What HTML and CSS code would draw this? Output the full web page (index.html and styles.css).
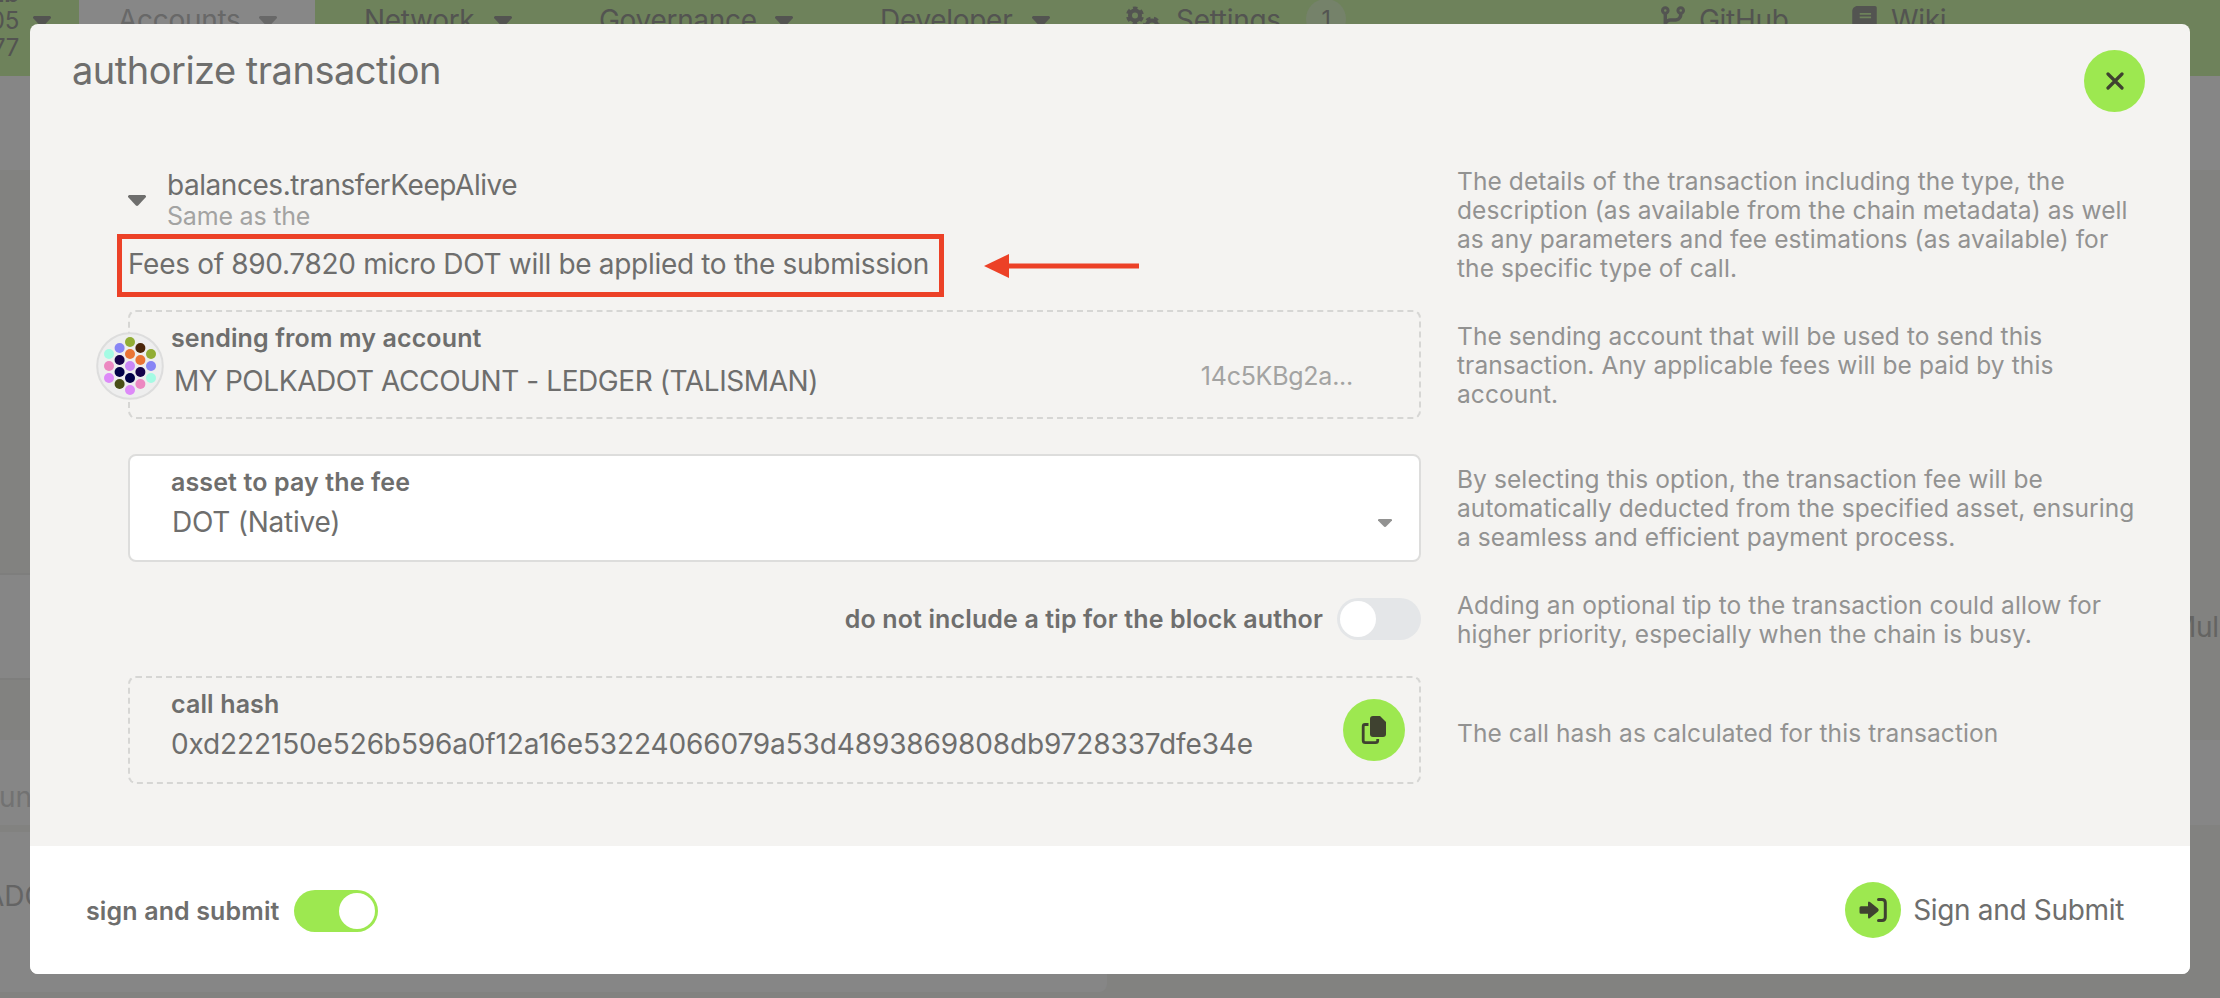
FILE: index.html
```
<!DOCTYPE html>
<html lang="en">
<head>
    <meta charset="UTF-8">
    <meta name="viewport" content="width=device-width, initial-scale=1.0">
    <title>Authorize transaction</title>
    <link rel="stylesheet" href="styles.css">
</head>
<body>
    <div class="app">
        <header class="topbar">
            <div class="chain">
                <div class="chain-info">
                    <b>ub</b>
                    <span>05</span>
                    <span>77</span>
                </div>
                <i class="caret"></i>
            </div>
            <nav>
                <ul>
                    <li class="active"><a href="#accounts">Accounts</a><i class="caret"></i></li>
                    <li class="network"><a href="#network">Network</a><i class="caret"></i></li>
                    <li class="governance"><a href="#governance">Governance</a><i class="caret"></i></li>
                    <li class="developer"><a href="#developer">Developer</a><i class="caret"></i></li>
                    <li class="settings">
                        <svg width="34" height="28" viewBox="0 0 34 28">
                            <g fill="none" stroke="#535451">
                                <circle cx="9" cy="9.500" r="5" stroke-width="4"/>
                                <circle cx="9" cy="9.500" r="7.500" stroke-width="3" stroke-dasharray="4.400 3.454" stroke-dashoffset="-1.700"/>
                                <circle cx="26" cy="19.500" r="5" stroke-width="4"/>
                                <circle cx="26" cy="19.500" r="7.500" stroke-width="3" stroke-dasharray="4.400 3.454" stroke-dashoffset="-5.600"/>
                            </g>
                        </svg>
                        <a href="#settings">Settings</a>
                        <span class="count">1</span>
                    </li>
                </ul>
            </nav>
            <div class="links">
                <a class="github" href="#github">
                    <svg width="24" height="28" viewBox="0 0 448 512" fill="#535451"><path d="M80 104a24 24 0 1 0 0-48 24 24 0 1 0 0 48zm80-24c0 32.800-19.700 61-48 73.300v87.800c18.800-10.900 40.700-17.100 64-17.100h96c35.300 0 64-28.700 64-64v-6.700C307.700 141 288 112.800 288 80c0-44.200 35.800-80 80-80s80 35.800 80 80c0 32.800-19.700 61-48 73.300V160c0 70.700-57.300 128-128 128H176c-35.300 0-64 28.700-64 64v6.700c28.300 12.300 48 40.500 48 73.300 0 44.200-35.800 80-80 80S0 476.200 0 432c0-32.800 19.700-61 48-73.300V153.300C19.700 141 0 112.800 0 80 0 35.800 35.800 0 80 0s80 35.800 80 80zm232 0a24 24 0 1 0-48 0 24 24 0 1 0 48 0z" fill-rule="evenodd"/></svg>
                    GitHub
                </a>
                <a class="wiki" href="#wiki">
                    <svg width="25" height="28" viewBox="0 0 448 512" fill="#535451"><path fill-rule="evenodd" d="M96 0C43 0 0 43 0 96v320c0 53 43 96 96 96h320c18 0 32-14 32-32s-14-32-32-32v-64c18 0 32-14 32-32V32c0-18-14-32-32-32H96zm40 128h208v32H136zm0 64h208v32H136z"/></svg>
                    Wiki
                </a>
            </div>
        </header>
        <div class="page">
            <div class="page-tabs"></div>
            <div class="page-space"></div>
            <div class="page-summary"><div class="summary-card"></div><span>Mul</span></div>
            <div class="page-gap"></div>
            <div class="page-filter"><span>un</span></div>
            <div class="page-table"><div class="page-card"><span>ADO</span></div></div>
        </div>
    </div>

    <div class="modal">
        <div class="modal-header">
            <h1>authorize transaction</h1>
            <button class="round close" aria-label="close">
                <svg width="18" height="18" viewBox="0 0 18 18"><path d="M2 2l14 14M16 2L2 16" stroke="#3f4230" stroke-width="3.200" stroke-linecap="round"/></svg>
            </button>
        </div>

        <div class="modal-content">
            <div class="row row-call">
                <div class="call">
                    <div class="call-info">
                        <i class="caret"></i>
                        <div>
                            <div class="call-name">balances.transferKeepAlive</div>
                            <div class="call-doc">Same as the</div>
                        </div>
                    </div>
                    <div class="fees">
                        <span class="fees-box">Fees of 890.7820 micro DOT will be applied to the submission</span>
                        <svg class="arrow" width="155" height="26" viewBox="0 0 155 26" fill="#ec4127"><path d="M0 13L25 1v24z"/><path d="M24 10.500h131v5H24z"/></svg>
                    </div>
                </div>
                <p class="help">The details of the transaction including the type, the description (as available from the chain metadata) as well as any parameters and fee estimations (as available) for the specific type of call.</p>
            </div>

            <div class="row row-account">
                <div class="field dashed">
                    <svg class="identicon" width="68" height="68" viewBox="-34 -34 68 68">
                        <circle r="32.800" fill="#eeeeee" stroke="#dddddd" stroke-width="2"/>
                        <circle cx="0" cy="-24" r="5" fill="#91ad34"/>
                        <circle cx="-10.400" cy="-18" r="5" fill="#8785f5"/>
                        <circle cx="10.400" cy="-18" r="5" fill="#4b260a"/>
                        <circle cx="-21" cy="-12" r="5" fill="#a5fbe4"/>
                        <circle cx="0" cy="-12" r="5" fill="#ea7434"/>
                        <circle cx="21" cy="-12" r="5" fill="#91ad34"/>
                        <circle cx="-10.400" cy="-6" r="5" fill="#16024a"/>
                        <circle cx="10.400" cy="-6" r="5" fill="#ea7434"/>
                        <circle cx="-21" cy="0" r="5" fill="#ec88c1"/>
                        <circle cx="0" cy="0" r="5" fill="#c986f7"/>
                        <circle cx="21" cy="0" r="5" fill="#8785f5"/>
                        <circle cx="-10.400" cy="6" r="5" fill="#020247"/>
                        <circle cx="10.400" cy="6" r="5" fill="#16024a"/>
                        <circle cx="-21" cy="12" r="5" fill="#dd8af8"/>
                        <circle cx="0" cy="12" r="5" fill="#020247"/>
                        <circle cx="21" cy="12" r="5" fill="#a5fbe4"/>
                        <circle cx="-10.400" cy="18" r="5" fill="#484f17"/>
                        <circle cx="10.400" cy="18" r="5" fill="#ec88c1"/>
                        <circle cx="0" cy="24" r="5" fill="#dd8af8"/>
                    </svg>
                    <label>sending from my account</label>
                    <div class="account">
                        <span class="account-name">MY POLKADOT ACCOUNT - LEDGER (TALISMAN)</span>
                        <span class="address">14c5KBg2a...</span>
                    </div>
                </div>
                <p class="help">The sending account that will be used to send this transaction. Any applicable fees will be paid by this account.</p>
            </div>

            <div class="row row-asset">
                <div class="field select">
                    <label>asset to pay the fee</label>
                    <div class="asset">
                        <span class="asset-name">DOT (Native)</span>
                        <i class="caret small"></i>
                    </div>
                </div>
                <p class="help">By selecting this option, the transaction fee will be automatically deducted from the specified asset, ensuring a seamless and efficient payment process.</p>
            </div>

            <div class="row row-tip">
                <div class="tip">
                    <label>do not include a tip for the block author</label>
                    <span class="toggle"></span>
                </div>
                <p class="help">Adding an optional tip to the transaction could allow for higher priority, especially when the chain is busy.</p>
            </div>

            <div class="row row-hash">
                <div class="field dashed hash-field">
                    <div>
                        <label>call hash</label>
                        <div class="hash">0xd222150e526b596a0f12a16e53224066079a53d4893869808db9728337dfe34e</div>
                    </div>
                    <button class="round" aria-label="copy">
                        <svg width="26" height="30" viewBox="0 0 26 30"><path d="M12 1h7l6 6v12q0 3-3 3H12q-3 0-3-3V4q0-3 3-3z" fill="#3f4230"/><path d="M7.500 9.500H4Q2.200 9.500 2.200 11.500V25.500Q2.200 27.700 4.400 27.700H14.500Q16.700 27.700 16.700 25.500V24" fill="none" stroke="#3f4230" stroke-width="2.800"/></svg>
                    </button>
                </div>
                <p class="help">The call hash as calculated for this transaction</p>
            </div>
        </div>

        <div class="modal-footer">
            <div class="sign">
                <label>sign and submit</label>
                <span class="toggle on"></span>
            </div>
            <button class="submit">
                <span class="round">
                    <svg width="28" height="26" viewBox="0 0 28 26"><path d="M2 9.200h7V6q0-2.500 2-1L19 11.500q1.600 1.500 0 3L11 21q-2 1.500-2-1v-3.200H2q-1.500 0-1.500-1.500v-4.600q0-1.500 1.500-1.500z" fill="#3f4230"/><path d="M19.500 2.500h3.500q3.300 0 3.300 3.300v14.400q0 3.300-3.300 3.300h-3.500" fill="none" stroke="#3f4230" stroke-width="3" stroke-linecap="round"/></svg>
                </span>
                <span class="submit-text">Sign and Submit</span>
            </button>
        </div>
    </div>
</body>
</html>
```
FILE: styles.css
```
* {
    margin: 0;
    padding: 0;
    box-sizing: border-box;
    font-family: Inter, 'Liberation Sans', sans-serif;
}

body {
    width: 2220px;
    height: 998px;
    overflow: hidden;
    background-color: #828280;
    color: #6e6e6d;
    font-size: 28px;
    line-height: 34px;
}

/* dimmed page behind the dialog */
.app {
    height: 998px;
    overflow: hidden;
    color: #535451;
}

.topbar {
    display: flex;
    height: 76px;
    background-color: #6e825b;
    letter-spacing: -0.3px;
}

.topbar a {
    color: #535451;
    text-decoration: none;
}

.chain {
    display: flex;
    width: 79px;
}

.chain-info {
    display: flex;
    flex-direction: column;
    align-items: flex-end;
    width: 19px;
    margin-right: 14px;
    margin-top: -20px;
    font-size: 24px;
    line-height: 27px;
    white-space: nowrap;
}

.caret {
    display: block;
    flex: none;
    width: 18px;
    height: 11px;
    background-color: currentColor;
    clip-path: polygon(0 8%, 6% 0, 94% 0, 100% 8%, 100% 18%, 56% 96%, 50% 100%, 44% 96%, 0 18%);
}

.topbar .caret {
    margin-top: 16px;
}

nav ul {
    display: flex;
    list-style: none;
    line-height: 40px;
}

nav ul li {
    display: flex;
    height: 76px;
    justify-content: space-between;
}

nav ul li.active {
    width: 236px;
    padding: 0 38px 0 39px;
    background-color: #878787;
}

nav ul li.active a,
nav ul li.active .caret {
    color: #686868;
}

nav ul li.network {
    width: 148px;
    margin-left: 49px;
}

nav ul li.governance {
    width: 194px;
    margin-left: 87px;
}

nav ul li.developer {
    width: 170px;
    margin-left: 87px;
}

nav ul li.settings {
    width: 220px;
    margin-left: 76px;
}

.settings svg {
    margin-top: 6px;
}

.settings a {
    width: 114px;
}

.count {
    width: 40px;
    height: 40px;
    margin-top: -1px;
    border-radius: 50%;
    background-color: #75826a;
    font-size: 23px;
    text-align: center;
}

.links {
    display: flex;
    margin-left: 315px;
    line-height: 40px;
}

.links a {
    display: flex;
    gap: 14px;
    white-space: nowrap;
}

.links svg {
    margin-top: 6px;
}

.links .github {
    width: 191px;
}

.page-tabs {
    height: 94px;
    background-color: #868686;
}

.page-space {
    height: 403px;
}

.page-summary {
    display: flex;
    justify-content: space-between;
    height: 107px;
}

.summary-card {
    width: 1107px;
    border: 2px solid #7e7e7d;
    border-left: none;
    background-color: #868686;
}

.page-summary span {
    width: 49px;
    margin-top: 37px;
    color: #646462;
    letter-spacing: -0.3px;
}

.page-gap {
    height: 60px;
}

.page-filter {
    height: 85px;
    padding-top: 40px;
    background-color: #868686;
    color: #727272;
}

.page-filter span {
    margin-left: -1px;
}

.page-table {
    height: 173px;
    padding-top: 7px;
}

.page-card {
    width: 1107px;
    height: 160px;
    padding-top: 47px;
    border-radius: 0 0 8px 0;
    background-color: #868686;
}

.page-card span {
    margin-left: -15px;
    color: #646464;
}

/* dialog */
.modal {
    position: absolute;
    top: 24px;
    left: 30px;
    display: flex;
    flex-direction: column;
    width: 2160px;
    height: 950px;
    border-radius: 8px;
    overflow: hidden;
    background-color: #f4f3f1;
}

.modal-header {
    display: flex;
    justify-content: space-between;
    height: 126px;
    padding: 26px 45px 0 42px;
}

h1 {
    margin-top: -3px;
    font-size: 38px;
    font-weight: 400;
    line-height: 46px;
    letter-spacing: -0.5px;
}

.round {
    display: flex;
    flex: none;
    align-items: center;
    justify-content: center;
    width: 62px;
    height: 62px;
    border: none;
    border-radius: 50%;
    background-color: #9de850;
}

.close {
    width: 61px;
}

.modal-content {
    flex: 1;
    padding-left: 98px;
}

.row {
    display: grid;
    grid-template-columns: 1293px 688px;
    column-gap: 36px;
    align-items: start;
}

.row-call {
    height: 160px;
}

.row-account,
.row-asset {
    height: 144px;
}

.row-tip {
    height: 78px;
}

.help {
    color: #929291;
    font-size: 24.5px;
    line-height: 29px;
    letter-spacing: 0.09px;
}

.row-call .help {
    margin-top: 17px;
}

.row-account .help {
    margin-top: 12px;
}

.row-asset .help {
    margin-top: 11px;
}

.row-tip .help {
    margin-top: -7px;
}

.row-hash .help {
    margin-top: 43px;
}

.call {
    padding-top: 18px;
}

.call-info {
    display: flex;
    gap: 21px;
    height: 66px;
}

.call-info .caret {
    margin-top: 27px;
}

.call-name {
    letter-spacing: -0.45px;
}

.call-doc {
    margin-top: -1px;
    color: #a3a3a2;
    font-size: 25px;
    line-height: 30px;
    letter-spacing: -0.2px;
}

.fees {
    display: flex;
    align-items: center;
    gap: 40px;
    margin-left: -11px;
}

.fees-box {
    width: 827px;
    height: 63px;
    padding: 8px 0 0 6px;
    border: 5px solid #ec4127;
    letter-spacing: -0.31px;
    white-space: nowrap;
}

.field {
    position: relative;
    height: 109px;
    padding: 11px 14px 0 41px;
    border: 2px solid #dddddc;
    border-radius: 8px;
}

.dashed {
    border-style: dashed;
    border-color: #d6d6d4;
}

.select {
    height: 108px;
    background-color: #fff;
}

.identicon {
    position: absolute;
    top: 20px;
    left: -34px;
}

label {
    display: block;
    font-size: 25px;
    font-weight: 600;
    line-height: 30px;
    letter-spacing: 0.13px;
    white-space: nowrap;
}

.account {
    display: flex;
    justify-content: space-between;
    padding: 11px 52px 0 3px;
}

.account-name {
    letter-spacing: -0.42px;
}

.address {
    margin-top: -5px;
    color: #a3a3a2;
    font-size: 25px;
    letter-spacing: -0.25px;
}

.asset {
    display: flex;
    justify-content: space-between;
    padding: 8px 13px 0 1px;
    letter-spacing: -0.25px;
}

.caret.small {
    width: 14px;
    height: 8px;
    margin-top: 14px;
    color: #929291;
}

.tip {
    display: flex;
    align-items: center;
    justify-content: flex-end;
    gap: 14px;
}

.toggle {
    width: 84px;
    height: 42px;
    padding: 3px;
    border-radius: 21px;
    background-color: #e4e6e8;
}

.toggle::before {
    content: '';
    display: block;
    width: 36px;
    height: 36px;
    border-radius: 50%;
    background-color: #fff;
}

.toggle.on {
    background-color: #9de850;
}

.toggle.on::before {
    margin-left: auto;
}

.hash-field {
    display: flex;
    justify-content: space-between;
    height: 108px;
}

.hash-field .round {
    margin-top: 10px;
}

.hash {
    margin-top: 8px;
    letter-spacing: -0.13px;
}

.modal-footer {
    display: flex;
    align-items: center;
    justify-content: space-between;
    height: 128px;
    padding: 0 66px 0 56px;
    background-color: #fff;
}

.sign {
    display: flex;
    align-items: center;
    gap: 14px;
    margin-top: 2px;
}

.submit {
    display: flex;
    align-items: center;
    gap: 12px;
    border: none;
    background: none;
    color: #6e6e6d;
    font-size: 28px;
    letter-spacing: -0.33px;
}

.submit .round {
    width: 56px;
    height: 56px;
}
```
